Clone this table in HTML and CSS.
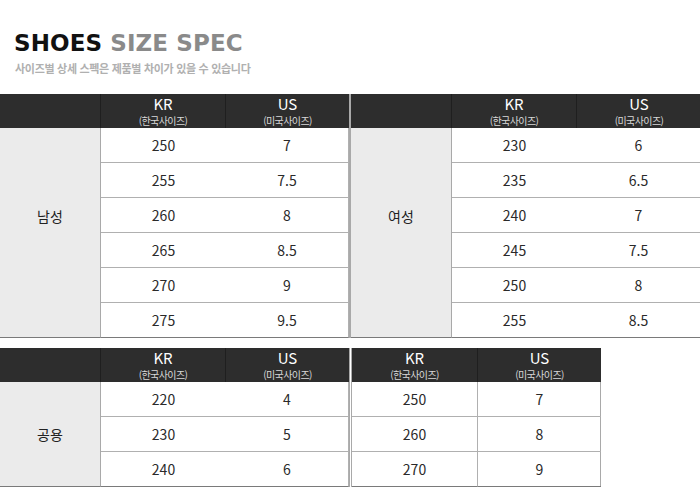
FILE: index.html
```html
<!DOCTYPE html>
<html lang="ko">
<head>
<meta charset="utf-8">
<link rel="stylesheet" href="styles.css">
</head>
<body>
<div class="page">
  <header class="head">
    <h1 class="title"><span class="dark">SHOES</span> <span class="light">SIZE SPEC</span></h1>
    <p class="sub">사이즈별 상세 스펙은 제품별 차이가 있을 수 있습니다</p>
  </header>

  <div class="row">
    <div class="spec spec-left rows6">
      <div class="th th-blank"></div>
      <div class="th"><span class="th-main">KR</span><span class="th-sub">(한국사이즈)</span></div>
      <div class="th"><span class="th-main">US</span><span class="th-sub">(미국사이즈)</span></div>
      <div class="label label-up span6">남성</div>
      <div class="td">250</div><div class="td">7</div>
      <div class="td">255</div><div class="td">7.5</div>
      <div class="td">260</div><div class="td">8</div>
      <div class="td">265</div><div class="td">8.5</div>
      <div class="td">270</div><div class="td">9</div>
      <div class="td last">275</div><div class="td last">9.5</div>
    </div>
    <div class="spec spec-right rows6">
      <div class="th th-blank"></div>
      <div class="th"><span class="th-main">KR</span><span class="th-sub">(한국사이즈)</span></div>
      <div class="th"><span class="th-main">US</span><span class="th-sub">(미국사이즈)</span></div>
      <div class="label label-up span6">여성</div>
      <div class="td">230</div><div class="td">6</div>
      <div class="td">235</div><div class="td">6.5</div>
      <div class="td">240</div><div class="td">7</div>
      <div class="td">245</div><div class="td">7.5</div>
      <div class="td">250</div><div class="td">8</div>
      <div class="td last">255</div><div class="td last">8.5</div>
    </div>
  </div>

  <div class="row row-bottom">
    <div class="spec spec-left rows3">
      <div class="th th-blank"></div>
      <div class="th"><span class="th-main">KR</span><span class="th-sub">(한국사이즈)</span></div>
      <div class="th"><span class="th-main">US</span><span class="th-sub">(미국사이즈)</span></div>
      <div class="label span3">공용</div>
      <div class="td">220</div><div class="td">4</div>
      <div class="td">230</div><div class="td">5</div>
      <div class="td last">240</div><div class="td last">6</div>
    </div>
    <div class="spec spec-small rows3">
      <div class="th"><span class="th-main">KR</span><span class="th-sub">(한국사이즈)</span></div>
      <div class="th"><span class="th-main">US</span><span class="th-sub">(미국사이즈)</span></div>
      <div class="td">250</div><div class="td">7</div>
      <div class="td">260</div><div class="td">8</div>
      <div class="td last">270</div><div class="td last">9</div>
    </div>
  </div>
</div>
</body>
</html>
```
FILE: styles.css
```css
* { box-sizing: border-box; }
html, body { margin: 0; padding: 0; background: #fff; }
body {
  font-family: "Noto Sans CJK KR", "Open Sans", sans-serif;
  color: #2a2a2a;
  width: 700px;
}
.head {
  height: 94px;
  padding: 30px 0 0 14px;
}
.title {
  margin: 0;
  font-family: "DejaVu Sans", sans-serif;
  font-weight: bold;
  font-size: 23px;
  line-height: 26px;
  letter-spacing: 0.1px;
}
.title .dark { color: #111; }
.title .light { color: #8a8a8a; }
.sub {
  margin: 5px 0 0 1px;
  font-size: 11px;
  line-height: 14px;
  letter-spacing: -0.3px;
  color: #b0b0b0;
  font-weight: bold;
}
.row {
  display: flex;
  align-items: flex-start;
}
.row-bottom { margin-top: 10px; }
.spec {
  display: grid;
  grid-template-rows: 34px;
  grid-auto-rows: 35px;
}
.spec-left {
  width: 350px;
  grid-template-columns: 101px 125px 123px;
  border-right: 1px solid #a9a9a9;
}
.spec-right {
  width: 350px;
  grid-template-columns: 101px 125px 124px;
  border-left: 1px solid #a9a9a9;
}
.spec-small {
  margin-left: 1px;
  width: 250px;
  grid-template-columns: 126px 123px;
  border-left: 1px solid #a9a9a9;
  border-right: 1px solid #a9a9a9;
}
.th {
  background: #2d2d2d;
  color: #fff;
  display: flex;
  flex-direction: column;
  align-items: center;
  justify-content: center;
  border-right: 1px solid #1f1f1f;
}
.th:nth-child(3) { border-right: 0; }
.spec-small .th:nth-child(2) { border-right: 0; }
.th-main {
  font-size: 15px;
  line-height: 18px;
}
.th-sub {
  font-size: 10px;
  line-height: 15px;
  letter-spacing: -0.6px;
  color: #d8d8d8;
}
.label {
  background: #ebebeb;
  border-right: 1px solid #a9a9a9;
  border-bottom: 1px solid #7a7a7a;
  display: flex;
  align-items: center;
  justify-content: center;
  font-size: 14px;
  color: #222;
}
.label-up { padding-bottom: 34px; }
.span6 { grid-row: 2 / span 6; }
.span3 { grid-row: 2 / span 3; }
.td {
  display: flex;
  align-items: center;
  justify-content: center;
  font-size: 14px;
  color: #2a2a2a;
  border-bottom: 1px solid #b0b0b0;
}
.spec-small .td:nth-child(odd) { border-right: 1px solid #b0b0b0; }
.spec-left .td:nth-child(even), .spec-right .td:nth-child(even) { border-right: 1px solid #b0b0b0; }
.td.last { border-bottom-color: #7a7a7a; }
```
